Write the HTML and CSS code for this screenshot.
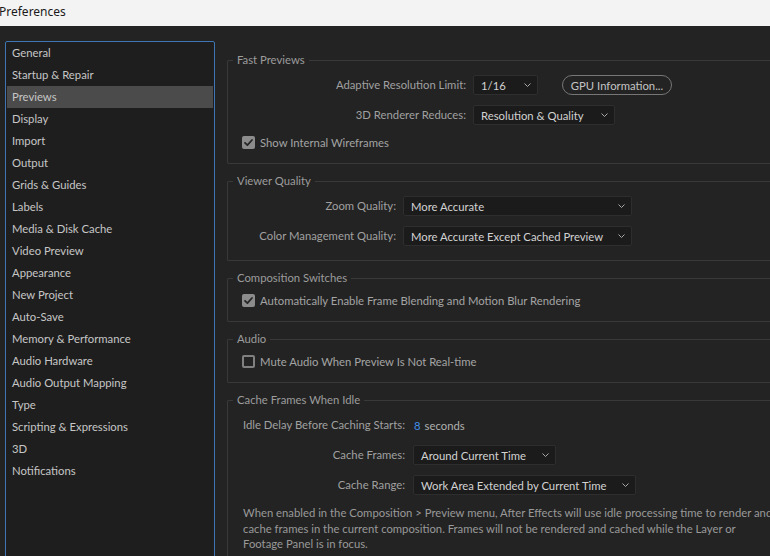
FILE: index.html
```html
<!DOCTYPE html>
<html>
<head>
<meta charset="utf-8">
<link rel="stylesheet" href="styles.css">
</head>
<body>
<div class="titlebar"><span class="title">Preferences</span></div>
<div class="main">
  <ul class="sidebar">
    <li class="item">General</li>
    <li class="item">Startup &amp; Repair</li>
    <li class="item selected">Previews</li>
    <li class="item">Display</li>
    <li class="item">Import</li>
    <li class="item">Output</li>
    <li class="item">Grids &amp; Guides</li>
    <li class="item">Labels</li>
    <li class="item">Media &amp; Disk Cache</li>
    <li class="item">Video Preview</li>
    <li class="item">Appearance</li>
    <li class="item">New Project</li>
    <li class="item">Auto-Save</li>
    <li class="item">Memory &amp; Performance</li>
    <li class="item">Audio Hardware</li>
    <li class="item">Audio Output Mapping</li>
    <li class="item">Type</li>
    <li class="item">Scripting &amp; Expressions</li>
    <li class="item">3D</li>
    <li class="item">Notifications</li>
  </ul>
  <div class="content">
    <fieldset class="group">
      <legend class="legend">Fast Previews</legend>
      <div class="body">
        <div class="form form-fast">
          <span class="label">Adaptive Resolution Limit:</span>
          <div class="field">
            <div class="select w-65"><span class="value">1/16</span><svg class="chev" viewBox="0 0 7 4" width="7" height="4"><path d="M0.5 0.5 L3.5 3.5 L6.5 0.5" /></svg></div>
            <button class="pill">GPU Information...</button>
          </div>
          <span class="label">3D Renderer Reduces:</span>
          <div class="field">
            <div class="select w-142"><span class="value">Resolution &amp; Quality</span><svg class="chev" viewBox="0 0 7 4" width="7" height="4"><path d="M0.5 0.5 L3.5 3.5 L6.5 0.5" /></svg></div>
          </div>
        </div>
        <label class="check"><span class="box checked"><svg viewBox="0 0 13 13" width="13" height="13"><path d="M3 6.8 L5.4 9.2 L10 4" /></svg></span><span class="check-text">Show Internal Wireframes</span></label>
      </div>
    </fieldset>

    <fieldset class="group">
      <legend class="legend">Viewer Quality</legend>
      <div class="body">
        <div class="form form-viewer">
          <span class="label">Zoom Quality:</span>
          <div class="field">
            <div class="select w-229"><span class="value">More Accurate</span><svg class="chev" viewBox="0 0 7 4" width="7" height="4"><path d="M0.5 0.5 L3.5 3.5 L6.5 0.5" /></svg></div>
          </div>
          <span class="label">Color Management Quality:</span>
          <div class="field">
            <div class="select w-229"><span class="value">More Accurate Except Cached Preview</span><svg class="chev" viewBox="0 0 7 4" width="7" height="4"><path d="M0.5 0.5 L3.5 3.5 L6.5 0.5" /></svg></div>
          </div>
        </div>
      </div>
    </fieldset>

    <fieldset class="group">
      <legend class="legend">Composition Switches</legend>
      <div class="body">
        <label class="check"><span class="box checked"><svg viewBox="0 0 13 13" width="13" height="13"><path d="M3 6.8 L5.4 9.2 L10 4" /></svg></span><span class="check-text">Automatically Enable Frame Blending and Motion Blur Rendering</span></label>
      </div>
    </fieldset>

    <fieldset class="group">
      <legend class="legend">Audio</legend>
      <div class="body">
        <label class="check"><span class="box"></span><span class="check-text">Mute Audio When Preview Is Not Real-time</span></label>
      </div>
    </fieldset>

    <fieldset class="group">
      <legend class="legend">Cache Frames When Idle</legend>
      <div class="body">
        <div class="form form-cache">
          <span class="label">Idle Delay Before Caching Starts:</span>
          <div class="field idle"><span class="num">8</span><span class="unit">seconds</span></div>
          <span class="label">Cache Frames:</span>
          <div class="field">
            <div class="select w-143"><span class="value">Around Current Time</span><svg class="chev" viewBox="0 0 7 4" width="7" height="4"><path d="M0.5 0.5 L3.5 3.5 L6.5 0.5" /></svg></div>
          </div>
          <span class="label">Cache Range:</span>
          <div class="field">
            <div class="select w-223"><span class="value">Work Area Extended by Current Time</span><svg class="chev" viewBox="0 0 7 4" width="7" height="4"><path d="M0.5 0.5 L3.5 3.5 L6.5 0.5" /></svg></div>
          </div>
        </div>
        <p class="note">When enabled in the Composition &gt; Preview menu, After Effects will use idle processing time to render and cache frames in the current composition. Frames will not be rendered and cached while the Layer or Footage Panel is in focus.</p>
      </div>
    </fieldset>
  </div>
</div>
</body>
</html>
```

FILE: styles.css
```css
* { box-sizing: border-box; }

html, body {
  margin: 0;
  padding: 0;
  width: 770px;
  height: 556px;
  overflow: hidden;
  background: #232323;
  font-family: "Lato", "Noto Sans", sans-serif;
  font-size: 11.3px;
}

.titlebar {
  height: 26px;
  background: #f3f3f3;
  display: flex;
  align-items: center;
}

.title {
  font-family: "Noto Sans", "Open Sans", sans-serif;
  font-size: 12px;
  color: #1a1a1a;
  margin-left: -1px;
  margin-top: -3px;
}

.main {
  display: flex;
  padding: 15px 0 0 5px;
}

.sidebar {
  list-style: none;
  margin: 0;
  padding: 0 1px;
  width: 210px;
  height: 560px;
  flex: none;
  background: #1e1e1e;
  border: 1px solid #3f75b3;
  border-radius: 2px;
}

.item {
  height: 22px;
  line-height: 22px;
  padding-left: 5px;
  color: #c6c6c6;
  white-space: nowrap;
}

.item.selected {
  background: #4b4b4b;
}

.content {
  flex: 1;
  padding-top: 12px;
  margin-left: 12px;
  min-width: 0;
}

.group {
  margin: 0 0 10px 0;
  padding: 0;
  border: 1px solid #393939;
  border-right: none;
  border-radius: 2px 0 0 2px;
  min-width: 0;
}

.legend {
  margin-left: 5px;
  padding: 0 4px;
  line-height: 14px;
  color: #9c9c9c;
}

.body {
  padding: 8px 0 14px 15px;
  display: flex;
  flex-direction: column;
  gap: 10px;
}

.form {
  display: grid;
  column-gap: 7px;
  row-gap: 10px;
  align-items: center;
}

.form-fast { grid-template-columns: 223px auto; }
.form-viewer { grid-template-columns: 153px auto; }
.form-cache { grid-template-columns: max-content auto; column-gap: 8px; }

.label {
  text-align: right;
  color: #a0a0a0;
  white-space: nowrap;
  line-height: 20px;
}

.form-cache .label:first-child { text-align: left; }

.field {
  display: flex;
  align-items: center;
  height: 20px;
}

.select {
  height: 20px;
  display: flex;
  align-items: center;
  justify-content: space-between;
  padding: 0 6px 0 7px;
  background: #1b1b1b;
  border: 1px solid #2e2e2e;
  border-radius: 2px;
  color: #d2d2d2;
  white-space: nowrap;
}

.w-65 { width: 65px; }
.w-142 { width: 142px; }
.w-143 { width: 143px; }
.w-223 { width: 223px; }
.w-229 { width: 229px; }

.chev {
  flex: none;
  fill: none;
  stroke: #a8a8a8;
  stroke-width: 1;
}

.pill {
  margin-left: 24px;
  width: 110px;
  height: 20px;
  padding: 0;
  background: transparent;
  border: 1px solid #767676;
  border-radius: 10px;
  color: #c4c4c4;
  font-family: inherit;
  font-size: 11.3px;
}

.idle { padding-left: 1px; }

.num {
  color: #3f8ee8;
  margin-right: 4px;
}

.unit { color: #b0b0b0; }

.check {
  display: flex;
  align-items: center;
  height: 14px;
  margin-left: -1px;
  gap: 5px;
  color: #a3a3a3;
  white-space: nowrap;
}

.box {
  width: 13px;
  height: 13px;
  flex: none;
  border: 2px solid #808080;
  border-radius: 2px;
  display: flex;
}

.box.checked {
  border: none;
  background: #8c8c8c;
}

.box svg {
  fill: none;
  stroke: #262626;
  stroke-width: 1.8;
  stroke-linecap: round;
  stroke-linejoin: round;
}

.note {
  margin: 0;
  width: 535px;
  color: #999999;
  line-height: 15.5px;
}
```
